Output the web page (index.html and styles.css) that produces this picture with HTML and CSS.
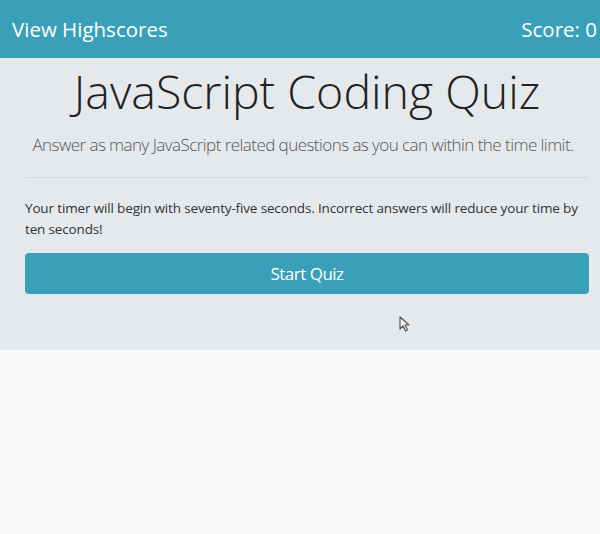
FILE: index.html
```html
<!DOCTYPE html>
<html lang="en">
<head>
  <meta charset="UTF-8" />
  <meta name="viewport" content="width=device-width, initial-scale=1.0"/>
  <title>JavaScript Coding Quiz</title>
  <link rel="stylesheet" href="styles.css">
</head>
<body>

  <header class="topbar">
    <a href="#" class="highscores-link">View Highscores</a>
    <span class="score">Score: 0</span>
  </header>

  <section class="jumbotron">
    <h1 class="quiz-title">JavaScript Coding Quiz</h1>
    <p class="lead">Answer as many JavaScript related questions as you can within the time limit.</p>
    <hr class="divider">
    <p class="rules">Your timer will begin with seventy-five seconds. Incorrect answers will reduce your time by ten seconds!</p>
    <button type="button" class="start-btn">Start Quiz</button>

    <svg class="cursor" width="12" height="16" viewBox="0 0 12 16">
      <path d="M1 1 L1 13 L4 10 L6.5 15 L8.5 14 L6 9 L10 9 Z" fill="#f4f4f4" stroke="#555" stroke-width="1.2" stroke-linejoin="round"/>
    </svg>
  </section>

</body>
</html>
```

FILE: styles.css
```css
* {
  margin: 0;
  padding: 0;
  box-sizing: border-box;
  font-family: 'Open Sans', 'Segoe UI', sans-serif;
}

body {
  background-color: #fafafc;
  color: #333;
}

.topbar {
  height: 58px;
  background-color: #3a9fb9;
  display: flex;
  justify-content: space-between;
  align-items: center;
  padding: 0 3px 0 12px;
  color: #fff;
  font-size: 20.5px;
}

.highscores-link {
  color: #fff;
  text-decoration: none;
}

.jumbotron {
  position: relative;
  background-color: #e6e9ec;
  height: 292px;
  padding: 6px 11px 0 25px;
}

.quiz-title {
  text-align: center;
  font-size: 46.5px;
  font-weight: 300;
  color: #222;
  line-height: 1.2;
}

.lead {
  text-align: center;
  font-size: 17px;
  line-height: 1.5;
  letter-spacing: -0.55px;
  font-weight: 300;
  color: #555;
  margin-top: 12px;
  padding-right: 8px;
}

.divider {
  border: 0;
  border-top: 1px solid #d6d9dc;
  margin: 20px 0 20px;
}

.rules {
  font-size: 13.5px;
  line-height: 21px;
  letter-spacing: -0.15px;
  color: #333;
}

.start-btn {
  display: block;
  width: 100%;
  height: 41px;
  margin-top: 13px;
  border: none;
  border-radius: 4px;
  background-color: #3a9fb9;
  color: #fff;
  font-size: 17px;
  letter-spacing: -0.5px;
  cursor: pointer;
}

.cursor {
  position: absolute;
  left: 399px;
  top: 258px;
}
```
